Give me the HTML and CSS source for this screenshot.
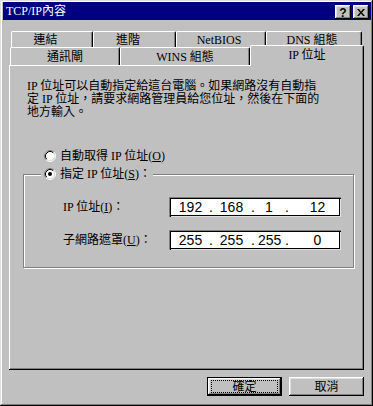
FILE: index.html
```html
<!DOCTYPE html>
<html lang="zh-Hant">
<head>
<meta charset="utf-8">
<title>TCP/IP內容</title>
<link rel="stylesheet" href="styles.css">
</head>
<body>
<div class="window">
  <div class="titlebar">
    <span class="title">TCP/IP內容</span>
    <div class="cap-btns">
      <div class="cap-btn cap-help">?</div>
      <div class="cap-btn">
        <svg width="8" height="7" viewBox="0 0 8 7"><path d="M0 0h2l2 2.5L6 0h2L5 3.5 8 7H6L4 4.5 2 7H0l3-3.5z" fill="#000"/></svg>
      </div>
    </div>
  </div>
  <div class="content">
    <div class="tab-row tab-row-back">
      <div class="tab tab-shift w82">連結</div>
      <div class="tab tab-shift w83">進階</div>
      <div class="tab tab-shift-s w90">NetBIOS</div>
      <div class="tab tab-shift-s w96">DNS 組態</div>
    </div>
    <div class="tab-row tab-row-front">
      <div class="tab w110">通訊閘</div>
      <div class="tab w130">WINS 組態</div>
      <div class="tab tab-active w114">IP 位址</div>
    </div>
    <div class="panel">
      <p class="desc">IP 位址可以自動指定給這台電腦。如果網路沒有自動指<br>定 IP 位址，請要求網路管理員給您位址，然後在下面的<br>地方輸入。</p>
      <div class="radio-row">
        <svg class="radio" width="12" height="12" viewBox="0 0 12 12">
          <circle cx="6" cy="6" r="4.5" fill="#fff"/>
          <path d="M2.11 9.89A5.5 5.5 0 0 1 9.89 2.11" fill="none" stroke="#808080"/>
          <path d="M9.89 2.11A5.5 5.5 0 0 1 2.11 9.89" fill="none" stroke="#fff"/>
          <path d="M2.82 9.18A4.5 4.5 0 0 1 9.18 2.82" fill="none" stroke="#000"/>
          <path d="M9.18 2.82A4.5 4.5 0 0 1 2.82 9.18" fill="none" stroke="#dfdfdf"/>
        </svg>
        <span>自動取得 IP 位址(<u>O</u>)</span>
      </div>
      <fieldset class="group">
        <legend class="group-legend">
          <span class="legend-inner">
            <svg class="radio" width="12" height="12" viewBox="0 0 12 12">
              <circle cx="6" cy="6" r="4.5" fill="#fff"/>
              <path d="M2.11 9.89A5.5 5.5 0 0 1 9.89 2.11" fill="none" stroke="#808080"/>
              <path d="M9.89 2.11A5.5 5.5 0 0 1 2.11 9.89" fill="none" stroke="#fff"/>
              <path d="M2.82 9.18A4.5 4.5 0 0 1 9.18 2.82" fill="none" stroke="#000"/>
              <path d="M9.18 2.82A4.5 4.5 0 0 1 2.82 9.18" fill="none" stroke="#dfdfdf"/>
              <circle cx="6" cy="6" r="2" fill="#000"/>
            </svg>
            <span>指定 IP 位址(<u>S</u>)：</span>
          </span>
        </legend>
        <div class="group-body">
          <div class="ip-row">
            <span class="ip-label">IP 位址(<u>I</u>)：</span>
            <div class="ip-box">
              <span>192</span><span>.</span><span>168</span><span>.</span><span>1</span><span>.</span><span>12</span>
            </div>
          </div>
          <div class="ip-row">
            <span class="ip-label">子網路遮罩(<u>U</u>)：</span>
            <div class="ip-box">
              <span>255</span><span>.</span><span>255</span><span>.</span><span>255</span><span>.</span><span>0</span>
            </div>
          </div>
        </div>
      </fieldset>
    </div>
    <div class="buttons">
      <div class="btn btn-default"><span class="focus-ring">確定</span></div>
      <div class="btn">取消</div>
    </div>
  </div>
</div>
</body>
</html>
```

FILE: styles.css
```css
* {
  box-sizing: border-box;
}

body {
  margin: 0;
  background: #c0c0c0;
  font-family: "Liberation Serif", "Noto Sans CJK TC", serif;
  font-size: 12px;
  line-height: 1;
  color: #000;
}

.window {
  width: 373px;
  height: 406px;
  background: #c0c0c0;
  padding: 2px 2px 0 3px;
  box-shadow: inset -1px -1px #000, inset 1px 1px #dfdfdf, inset -2px -2px #808080, inset 2px 2px #fff;
}

.titlebar {
  display: flex;
  align-items: center;
  height: 18px;
  background: #000080;
}

.title {
  flex: 1;
  color: #fff;
  padding-left: 3px;
  white-space: nowrap;
}

.cap-btns {
  display: flex;
  gap: 2px;
  margin-right: 2px;
  margin-top: 2px;
}

.cap-btn {
  width: 16px;
  height: 14px;
  background: #c0c0c0;
  box-shadow: inset -1px -1px #000, inset 1px 1px #fff, inset -2px -2px #808080, inset 2px 2px #dfdfdf;
  display: flex;
  align-items: center;
  justify-content: center;
}

.cap-help {
  font-family: "Liberation Sans", sans-serif;
  font-weight: bold;
  font-size: 12px;
  padding-top: 1px;
}

.content {
  margin: 11px 7px 0 6px;
}

.tab-row {
  display: flex;
}

.tab-row-back {
  height: 16px;
  padding-left: 2px;
}

.tab-row-front {
  height: 18px;
  padding-left: 1px;
  align-items: flex-end;
}

.tab {
  height: 100%;
  display: flex;
  align-items: center;
  justify-content: center;
  white-space: nowrap;
  background: #c0c0c0;
  border-top: 1px solid #fff;
  border-left: 1px solid #fff;
  border-right: 1px solid #000;
  border-radius: 2px 2px 0 0;
  box-shadow: inset -1px 0 #808080;
}

.tab-row-back .tab {
  padding-top: 1px;
}

.tab-shift {
  padding-right: 13px;
}

.tab-shift-s {
  padding-right: 4px;
}

.w82 { width: 82px; }
.w83 { width: 83px; }
.w90 { width: 90px; }
.w96 { width: 96px; }
.w110 { width: 110px; }
.w130 { width: 130px; }
.w114 { width: 114px; }

.tab-active {
  height: 21px;
  margin-bottom: -1px;
  position: relative;
  z-index: 1;
  padding-bottom: 2px;
}

.panel {
  height: 305px;
  background: #c0c0c0;
  padding-top: 15px;
  box-shadow: inset -1px -1px #000, inset 1px 1px #fff, inset -2px -2px #808080;
}

.desc {
  margin: 0 0 0 18px;
  line-height: 13px;
  white-space: nowrap;
}

.radio {
  display: block;
  flex: none;
}

.radio-row {
  display: flex;
  align-items: center;
  gap: 4px;
  height: 16px;
  margin: 29px 0 0 35px;
  white-space: nowrap;
}

.group {
  margin: 2px 0 0 14px;
  padding: 0;
  width: 331px;
  min-width: 0;
  border: 1px solid #808080;
  box-shadow: 1px 1px 0 #fff, inset 1px 1px 0 #fff;
}

.group-legend {
  margin-left: 17px;
  padding: 0 2px 0 3px;
  background: #c0c0c0;
}

.legend-inner {
  display: flex;
  align-items: center;
  gap: 4px;
  height: 16px;
  white-space: nowrap;
}

.group-body {
  padding: 15px 0 17px 39px;
}

.ip-row {
  display: flex;
  align-items: center;
  height: 20px;
}

.ip-row + .ip-row {
  margin-top: 13px;
}

.ip-label {
  width: 106px;
  white-space: nowrap;
}

.ip-box {
  width: 172px;
  height: 20px;
  background: #fff;
  box-shadow: inset 1px 1px #808080, inset 2px 2px #000, inset -1px -1px #dfdfdf, inset -2px -2px #000;
  display: grid;
  grid-template-columns: 33px 8px 33px 10px 22px 14px 1fr;
  align-items: center;
  padding-left: 5px;
  font-family: "Liberation Sans", sans-serif;
  font-size: 14px;
  text-align: center;
}

.buttons {
  display: flex;
  justify-content: flex-end;
  gap: 7px;
  margin-top: 7px;
}

.btn {
  width: 75px;
  height: 19px;
  background: #c0c0c0;
  display: flex;
  align-items: center;
  justify-content: center;
  box-shadow: inset -1px -1px #000, inset 1px 1px #fff, inset -2px -2px #808080, inset 2px 2px #dfdfdf;
}

.btn-default {
  border: 1px solid #000;
}

.focus-ring {
  width: 67px;
  height: 13px;
  border: 1px dotted #000;
  display: flex;
  align-items: center;
  justify-content: center;
}
```
